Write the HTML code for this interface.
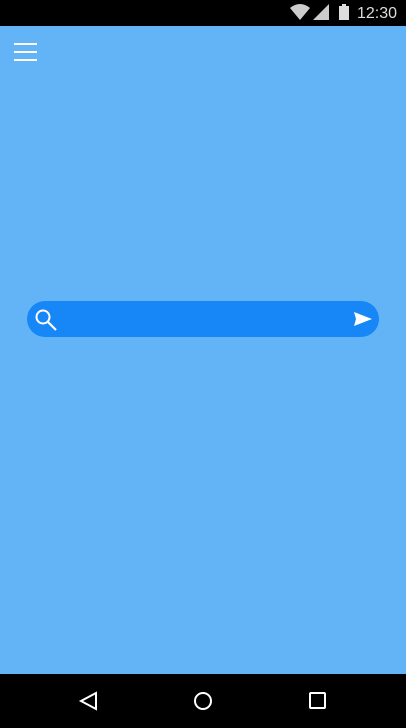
<!DOCTYPE html><html><head><style>
body{margin:0;width:406px;height:728px;background:#62b4f6;position:relative;overflow:hidden;font-family:"Liberation Sans",sans-serif}
.sb{position:absolute;top:0;left:0;width:406px;height:26px;background:#000}
.nb{position:absolute;top:674px;left:0;width:406px;height:54px;background:#000}
.l{position:absolute;left:14px;width:23px;height:2px;background:#fff}
.bar{position:absolute;left:27px;top:301px;width:352px;height:36px;border-radius:18px;background:#1786f6}
</style></head><body>
<div class="sb">
<svg width="406" height="26" style="position:absolute;left:0;top:0">
<path d="M290 8 Q300 0 310 8 L300 20 Z" fill="#ccc"/>
<path d="M313 20 L329 4 L329 20 Z" fill="#ccc"/>
<rect x="339" y="6" width="10" height="14" fill="#ddd"/><rect x="342" y="4" width="4" height="2" fill="#ddd"/>
<text x="357" y="18" fill="#ddd" font-size="16" font-family="Liberation Sans">12:30</text>
</svg></div>
<div class="l" style="top:43px"></div><div class="l" style="top:51px"></div><div class="l" style="top:59px"></div>
<div class="bar"></div>
<svg width="406" height="728" style="position:absolute;left:0;top:0">
<circle cx="43" cy="317" r="6.5" fill="none" stroke="#fff" stroke-width="2"/>
<line x1="48" y1="322" x2="56" y2="330" stroke="#fff" stroke-width="2.2"/>
<path d="M354 312 L372 319 L354 326 L356 319 Z" fill="#fff"/>
<path d="M96 693 L81 701 L96 709 Z" fill="none" stroke="#fff" stroke-width="2"/>
<circle cx="203" cy="701" r="8" fill="none" stroke="#fff" stroke-width="2"/>
<rect x="310" y="693" width="15" height="15" rx="1" fill="none" stroke="#fff" stroke-width="2"/>
</svg>
<div class="nb" style="z-index:-1"></div>
</body></html>
